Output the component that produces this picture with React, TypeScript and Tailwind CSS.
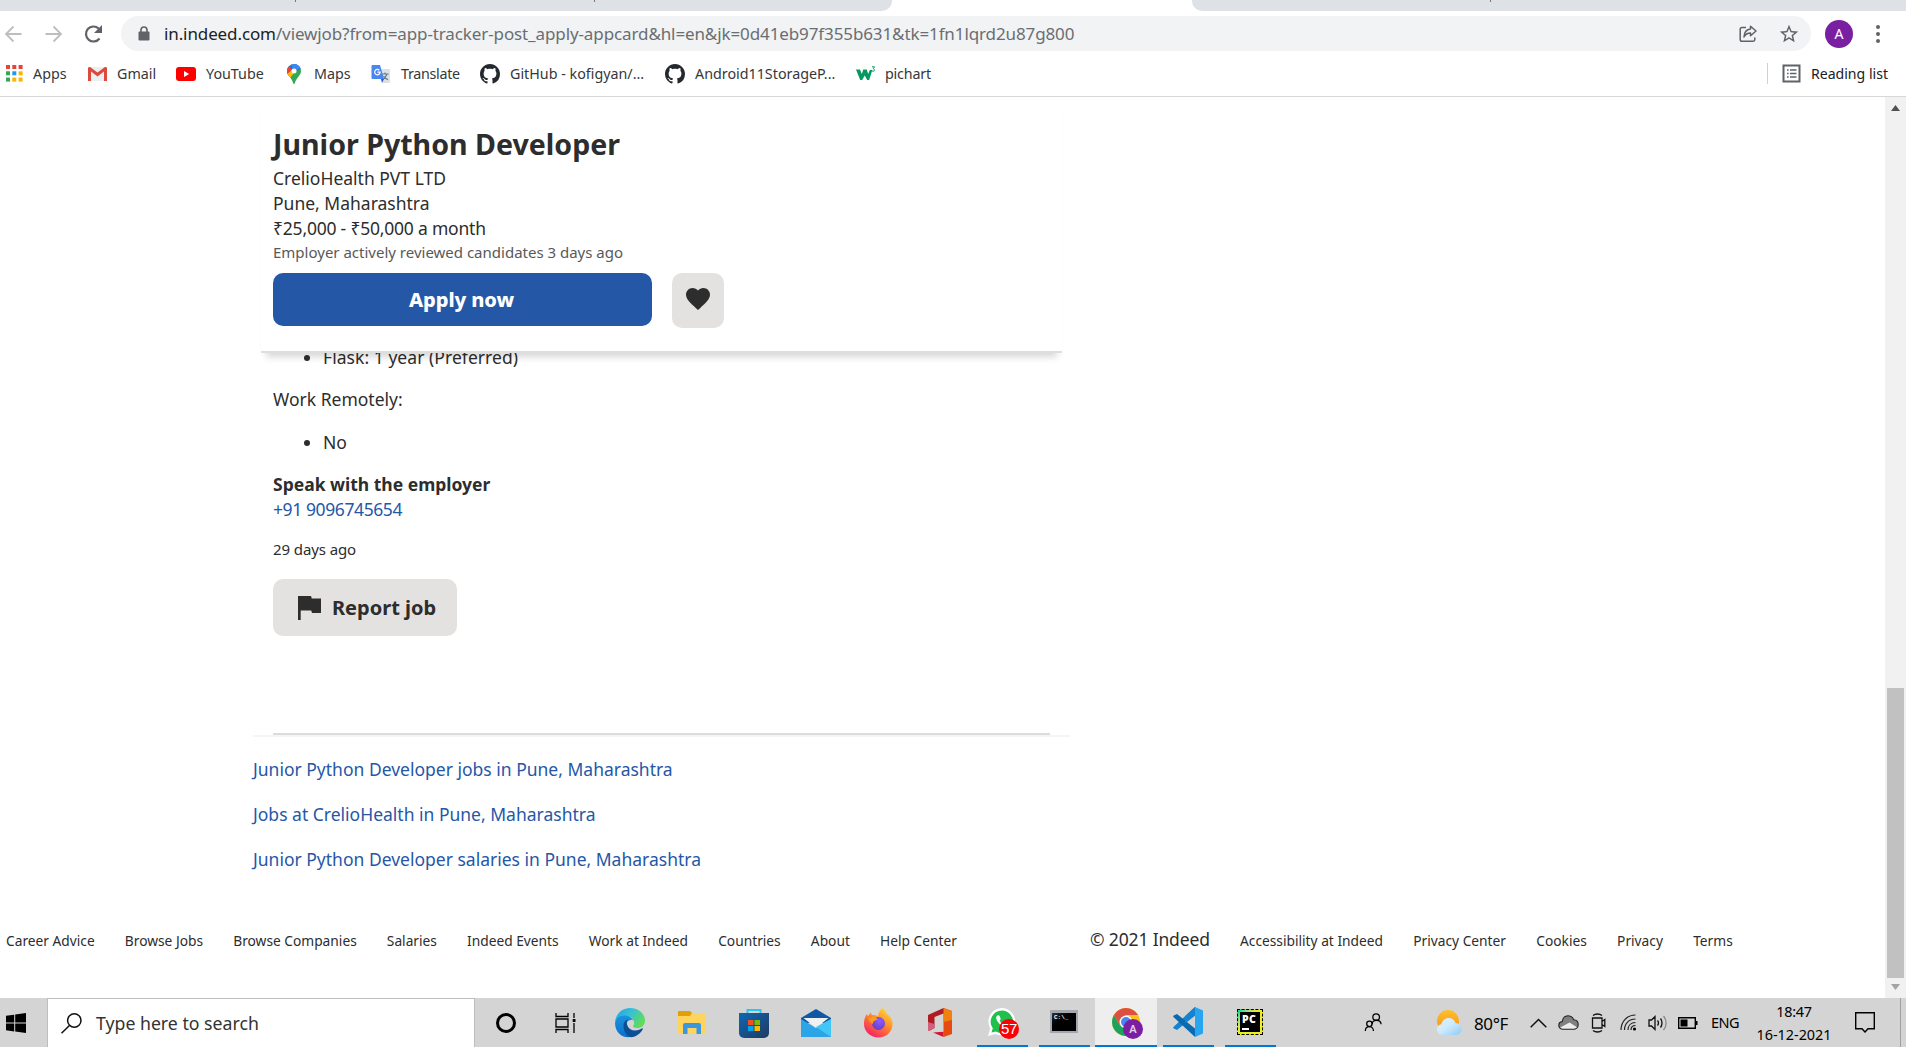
import type { ReactNode } from "react";

/* ---------- browser chrome icons ---------- */

const GitHubMark = () => (
  <svg width="20" height="20" viewBox="0 0 16 16" fill="#24292f">
    <path d="M8 0C3.58 0 0 3.58 0 8c0 3.54 2.29 6.53 5.47 7.59.4.07.55-.17.55-.38 0-.19-.01-.82-.01-1.49-2.01.37-2.53-.49-2.69-.94-.09-.23-.48-.94-.82-1.13-.28-.15-.68-.52-.01-.53.63-.01 1.08.58 1.23.82.72 1.21 1.87.87 2.33.66.07-.52.28-.87.51-1.07-1.78-.2-3.64-.89-3.64-3.95 0-.87.31-1.59.82-2.15-.08-.2-.36-1.02.08-2.12 0 0 .67-.21 2.2.82.64-.18 1.32-.27 2-.27s1.36.09 2 .27c1.53-1.04 2.2-.82 2.2-.82.44 1.1.16 1.92.08 2.12.51.56.82 1.27.82 2.15 0 3.07-1.87 3.75-3.65 3.95.29.25.54.73.54 1.48 0 1.07-.01 1.93-.01 2.2 0 .21.15.46.55.38A8.01 8.01 0 0 0 16 8c0-4.42-3.58-8-8-8z" />
  </svg>
);

const AppsGrid = () => {
  const colors = ["#ea4335", "#ea4335", "#ea4335", "#34a853", "#1a9bf0", "#fbb400", "#34a853", "#fbb400", "#fbb400"];
  return (
    <svg width="17" height="17" viewBox="0 0 17 17" className="ml-[3px]">
      {colors.map((c, i) => (
        <rect key={i} x={(i % 3) * 6.3} y={Math.floor(i / 3) * 6.3} width="4" height="4" fill={c} />
      ))}
    </svg>
  );
};

const Gmail = () => (
  <svg width="19" height="14" viewBox="0 0 19 14" className="ml-px">
    <path d="M1 0h17v14H1z" fill="#eceff1" />
    <path d="M0 1.5V14h3V4.6l6.5 4.8L16 4.6V14h3V1.5C19 0 17.4-.4 16.3.4L9.5 5.6 2.7.4C1.600-.4 0 0 0 1.500z" fill="#dc4a3d" />
  </svg>
);

const YouTube = () => (
  <svg width="20" height="14" viewBox="0 0 20 14">
    <rect width="20" height="14" rx="3" fill="#f00" />
    <path d="M8 4l5.200 3L8 10z" fill="#fff" />
  </svg>
);

const MapsPin = () => (
  <svg width="14" height="20" viewBox="0 0 14 20" className="ml-[3px]">
    <defs>
      <clipPath id="pin">
        <path d="M7 0a7 7 0 0 0-7 7c0 2 .8 3.500 2 5 2 2.500 3.500 4.300 4.200 7.200.3 1.100 1.300 1.100 1.600 0C8.500 16.300 10 14.500 12 12c1.200-1.500 2-3 2-5a7 7 0 0 0-7-7z" />
      </clipPath>
    </defs>
    <g clipPath="url(#pin)">
      <path d="M0 0h14v20H0z" fill="#34a853" />
      <path d="M-1 5L2 2l10 -3 4 6-9 2-6 7z" fill="#1a73e8" />
      <path d="M-1 4l3-2 4 4-5 6z" fill="#ea4335" />
      <path d="M-1 11L6 5l7-3.500L3 14z" fill="#fbbc04" />
      <path d="M4 0h6l4 4-7 3z" fill="#4285f4" />
    </g>
    <circle cx="7" cy="7" r="2.500" fill="#fff" />
  </svg>
);

const Translate = () => (
  <svg width="20" height="20" viewBox="0 0 20 20">
    <path d="M8 5h10a1 1 0 0 1 1 1v12a1 1 0 0 1-1 1h-6z" fill="#dde1e6" />
    <path d="M10.500 10h7M14 8.500V10m2 0c-.7 2.500-2.400 4.500-4.500 5.500M12.500 12c1 1.700 2.500 3 4.500 3.600" stroke="#607988" fill="none" strokeWidth="1.100" />
    <path d="M1.500 1H9l4 14H1.500a1 1 0 0 1-1-1V2a1 1 0 0 1 1-1z" fill="#4a86f0" />
    <path d="M10 15h3l-2 4z" fill="#2a56c6" />
    <path d="M8.300 6.200a2.700 2.700 0 1 0 .8 2H6.400" stroke="#fff" fill="none" strokeWidth="1.200" />
  </svg>
);

const W3 = () => (
  <svg width="20" height="15" viewBox="0 0 20 15" className="ml-px">
    <path d="M0 3.500h4l1.800 4.500L7.300 3.500h3.400L12.200 8l1.600-4h2.500L13.200 14h-2L8.700 9.500 6.200 14h-2z" fill="#059862" />
    <path d="M16 .8h2.500L17.200 2.700c1.700 0 1.700 2.600-.1 2.600-.8 0-1.300-.3-1.500-.8" stroke="#059862" fill="none" strokeWidth="1" />
  </svg>
);

const ReadingList = () => (
  <svg width="19" height="19" viewBox="0 0 19 19" fill="none" stroke="#5f6368" strokeWidth="2">
    <path d="M1.500 1.500h16v16h-16z" />
    <path d="M5 6h1.600M5 9.500h1.600M5 13h1.600M8 6h6.500M8 9.500h6.500M8 13h6.500" strokeWidth="1.500" />
  </svg>
);

/* ---------- taskbar icons ---------- */

const Edge = () => (
  <svg width="30" height="30" viewBox="0 0 30 30">
    <defs>
      <linearGradient id="eg" x1="0" y1="0" x2="1" y2=".5">
        <stop offset="0" stopColor="#1f9fe0" />
        <stop offset=".5" stopColor="#35c1d8" />
        <stop offset="1" stopColor="#5fdc5a" />
      </linearGradient>
      <linearGradient id="eb" x1="0" y1="0" x2="0" y2="1">
        <stop offset="0" stopColor="#1b94de" />
        <stop offset="1" stopColor="#0a6fcd" />
      </linearGradient>
    </defs>
    <path d="M0 14C1 5 8 0 15 0c9 0 15 6 15 12.500 0 5-3.500 7.500-7.500 7.500-3 0-5-1-4.500-2.200 2-2.500 1-6-1.500-8C12 6.500 4 8 0 14z" fill="url(#eg)" />
    <path d="M0 15C1 9 6 7 10.500 7.500 15 8 18.500 11 18.800 14c-2-3-7.300-2-7.800 3-.4 5 4 9.500 9 10.500C10 32.500 0 26 0 15z" fill="url(#eb)" />
    <path d="M8.500 18c0-4 2.200-6 4.500-7-3 4 0 11.500 7 11.500 3.500 0 5.500-1.200 7-2.200 1-.3 1 .6.5 1.500C25 26 20 30 14.500 29 10.500 27 8.500 22 8.500 18z" fill="#0c4f96" />
    <path d="M17.800 12c2 2 1.800 4.300.2 5.800-.3 1 .3 1.800 1.500 2.500-5 0-7-5.500-4.500-8 .8-.8 2-.8 2.800-.3z" fill="#d4d4d4" />
  </svg>
);

const Folder = () => (
  <svg width="28" height="24" viewBox="0 0 28 24">
    <path d="M0 1a1 1 0 0 1 1-1h11l2 2v4H0z" fill="#e2a100" />
    <path d="M0 5h12l2-3h13a1 1 0 0 1 1 1v19a1 1 0 0 1-1 1H1a1 1 0 0 1-1-1z" fill="#ffd45e" />
    <path d="M5 23V14a2 2 0 0 1 2-2h14a2 2 0 0 1 2 2v9h-4.500v-6h-9v6z" fill="#3a96dd" />
  </svg>
);

const Store = () => (
  <svg width="30" height="30" viewBox="0 0 30 30">
    <defs>
      <linearGradient id="st" x1="0" y1="0" x2="1" y2="1">
        <stop offset="0" stopColor="#0d67b5" />
        <stop offset="1" stopColor="#203a5f" />
      </linearGradient>
    </defs>
    <path d="M8.500 6V2h13v4" fill="none" stroke="#2fc3f2" strokeWidth="2" />
    <path d="M0 5h30v20a5 5 0 0 1-5 5H5a5 5 0 0 1-5-5z" fill="url(#st)" />
    <path d="M9 12h5.500v5H9z" fill="#f25022" />
    <path d="M15.500 12H21v5h-5.500z" fill="#7fba00" />
    <path d="M9 18h5.500v5H9z" fill="#00a4ef" />
    <path d="M15.500 18H21v5h-5.500z" fill="#ffb900" />
  </svg>
);

const Mail = () => (
  <svg width="30" height="28" viewBox="0 0 30 28">
    <path d="M0 9L15 0l15 9v5H0z" fill="#0f58a4" />
    <path d="M2.500 9h25L15 19z" fill="#f1f1f1" />
    <path d="M0 10l15 9 15-9v18H0z" fill="#2ba4e8" />
    <path d="M30 10v18L15 18z" fill="#42c6f5" />
  </svg>
);

const Firefox = () => (
  <svg width="29" height="30" viewBox="0 0 29 30">
    <defs>
      <linearGradient id="ff" x1=".85" y1="0" x2=".2" y2="1">
        <stop offset="0" stopColor="#ffe23a" />
        <stop offset=".45" stopColor="#ff8a2a" />
        <stop offset="1" stopColor="#f5156c" />
      </linearGradient>
      <radialGradient id="fp" cx=".6" cy=".3" r=".8">
        <stop offset="0" stopColor="#9059ff" />
        <stop offset="1" stopColor="#5b3fc4" />
      </radialGradient>
    </defs>
    <path d="M18 0c3 2 4 4 5 6 3 1.500 6 6 5.500 11C28 24 22 29.500 14.500 29.500S0 24 0 16c0-4 1-7.500 3-10l.8 2.500C5 7 6 5 7 4.500L7.800 7c3 0 5 .4 6.200 1.500C14 5 16 2 18 0z" fill="url(#ff)" />
    <circle cx="14.500" cy="15.500" r="6.500" fill="url(#fp)" />
    <path d="M4 10c4-2.500 8-1 10 1.500-2.500.2-3 1.500-4.500 2L8.500 16C6 14 5 12 4 10z" fill="#ff9a1f" />
  </svg>
);

const Office = () => (
  <svg width="24" height="29" viewBox="0 0 24 29">
    <path d="M15.500 0L24 3v23l-8.500 3z" fill="#e64a0f" />
    <path d="M15.500 0L24 3v9l-8.500 2z" fill="#f08010" />
    <path d="M15.500 0v5.500L6.500 9v11l-4.500 2.500H0V7z" fill="#b01c22" />
    <path d="M0 14l6.500 2v4L2 22.500H0z" fill="#d0607e" />
    <path d="M5 24.500l10.500-.7V29z" fill="#d01530" />
  </svg>
);

const WhatsApp = () => (
  <div className="relative">
    <svg width="28" height="28" viewBox="0 0 28 28">
      <path d="M14 0a13.700 13.700 0 0 0-11.800 20.500L0 28l7.500-2A13.700 13.700 0 1 0 14 0z" fill="#fff" />
      <path d="M14 2.500a11.300 11.300 0 0 0-9.200 17.800L3.500 24.500l4.300-1.100A11.300 11.300 0 1 0 14 2.500z" fill="#1fc04c" />
      <path d="M9.500 7.500c-2 1-1.500 3.700 0 6 2 3 4.500 5 7.500 6 2 .4 4-1 3.800-2.500l-3-1.600-1.600 1.600c-2.200-1-3.600-2.400-4.600-4.400L12.800 11 11.500 7.800c-.3-.6-1.200-.7-2-.3z" fill="#fff" />
    </svg>
    <span className="absolute left-[11px] top-[11px] flex size-[20px] items-center justify-center rounded-full bg-[#fb0007] font-['Liberation_Sans'] text-[15px] leading-none tracking-[-0.3px] text-white">
      57
    </span>
  </div>
);

const Terminal = () => (
  <div className="h-[23px] w-[28px] border-2 border-t-[3px] border-[#a4a8ae] bg-black bg-gradient-to-br from-[#333] via-black to-black pl-[2px] pt-px font-['Liberation_Mono'] text-[6px] font-bold leading-[7px] text-white">
    C:\_
  </div>
);

const Chrome = () => (
  <div className="relative">
    <svg width="28" height="28" viewBox="0 0 28 28">
      <circle cx="14" cy="14" r="14" fill="#fbc116" />
      <path d="M1.900 7A14 14 0 0 0 14 28l6-10.500L8 17.500z" fill="#1ba35e" />
      <path d="M14 7h12.100A14 14 0 0 0 1.900 7l6.100 10.500z" fill="#de4f43" />
      <circle cx="14" cy="14" r="6.500" fill="#fff" />
      <circle cx="14" cy="14" r="5" fill="#4587f3" />
    </svg>
    <span className="absolute left-[11px] top-[11px] flex size-[20px] items-center justify-center rounded-full bg-[#7b1fa2] text-[11px] font-semibold leading-none text-[#e3cdec]">
      A
    </span>
  </div>
);

const VSCode = () => (
  <svg width="30" height="30" viewBox="0 0 30 30">
    <path d="M22 8.500V0L.7 19.700a1.200 1.200 0 0 0 0 1.800L4 23z" fill="#1284d0" />
    <path d="M22 21.500V30L.7 10.300a1.200 1.200 0 0 1 0-1.800L4 7z" fill="#0a6ab0" />
    <path d="M22 8.500V0L12 9.300v6.800z" fill="#1284d0" />
    <path d="M22 0l8 3.500v23L22 30z" fill="#27a5f0" />
  </svg>
);

const PyCharm = () => (
  <div className="size-[26px] bg-gradient-to-br from-[#21d789] from-10% via-[#e6ee25] via-40% to-[#f0e92c] p-[3px] outline-1 -outline-offset-1 outline-dashed outline-black">
    <div className="flex size-full flex-col bg-black px-[2px] pt-[2px]">
      <span className="font-['Open_Sans'] text-[10.500px] font-extrabold leading-[11px] tracking-[0.3px] text-white">PC</span>
      <span className="mt-[3px] h-[2px] w-[7px] bg-white" />
    </div>
  </div>
);

const Weather = () => (
  <svg width="26" height="25" viewBox="0 0 26 25">
    <defs>
      <linearGradient id="sun" x1="0" y1="0" x2="0" y2="1">
        <stop offset="0" stopColor="#ffc02c" />
        <stop offset="1" stopColor="#f88d1a" />
      </linearGradient>
      <linearGradient id="weatherCloud" x1="0" y1="0" x2="1" y2="1">
        <stop offset="0" stopColor="#dff2ff" />
        <stop offset=".5" stopColor="#cbe9fd" />
        <stop offset="1" stopColor="#8fc9f5" />
      </linearGradient>
    </defs>
    <circle cx="12" cy="11" r="11" fill="url(#sun)" />
    <g fill="url(#weatherCloud)">
      <path d="M6.500 25C3 25 .8 22.600.8 19.600c0-2.900 2-5 4.700-5.300C6 10.500 9 8 12.500 8c3.600 0 6.300 2.200 7.200 5.300 3.400 0 6.100 2.500 6.100 5.800 0 3.400-2.700 5.900-6 5.900z" />
    </g>
  </svg>
);

/* ---------- data ---------- */

const bookmarks: { label: string; icon: ReactNode; cls: string }[] = [
  { label: "Apps", icon: <AppsGrid />, cls: "w-[84px]" },
  { label: "Gmail", icon: <Gmail />, cls: "w-[89px]" },
  { label: "YouTube", icon: <YouTube />, cls: "w-[108px]" },
  { label: "Maps", icon: <MapsPin />, cls: "w-[87px]" },
  { label: "Translate", icon: <Translate />, cls: "w-[109px] tracking-[-0.3px]" },
  { label: "GitHub - kofigyan/...", icon: <GitHubMark />, cls: "w-[185px]" },
  { label: "Android11StorageP...", icon: <GitHubMark />, cls: "w-[190px]" },
  { label: "pichart", icon: <W3 />, cls: "w-[90px] tracking-[-0.2px]" },
];

const footerLeft = ["Career Advice", "Browse Jobs", "Browse Companies", "Salaries", "Indeed Events", "Work at Indeed", "Countries", "About", "Help Center"];
const footerRight = ["Accessibility at Indeed", "Privacy Center", "Cookies", "Privacy", "Terms"];

const tasks: { icon: ReactNode; state?: "open" | "active" }[] = [
  { icon: <span className="size-[20px] rounded-full border-[3px] border-black" /> },
  {
    icon: (
      <svg width="22" height="20" viewBox="0 0 22 20" fill="none" stroke="#000" strokeWidth="1.300" className="-ml-1">
        <path d="M1 0v3.500h12V0M1 6h12v8H1zM1 20v-3.500h12V20M19 0v5M19 10v10" />
        <path d="M17.700 6h2.800v3h-2.800z" fill="#000" stroke="none" />
      </svg>
    ),
  },
  { icon: <Edge /> },
  { icon: <Folder /> },
  { icon: <Store /> },
  { icon: <Mail /> },
  { icon: <Firefox /> },
  { icon: <Office /> },
  { icon: <WhatsApp />, state: "open" },
  { icon: <Terminal />, state: "open" },
  { icon: <Chrome />, state: "active" },
  { icon: <VSCode />, state: "open" },
  { icon: <PyCharm />, state: "open" },
];

/* ---------- sections ---------- */

function TabStrip() {
  return (
    <div className="flex h-[11px] shrink-0 bg-white">
      <div className="flex w-[892px] rounded-br-[10px] bg-[#dee1e6]">
        <span className="ml-[295px] h-[2px] w-px bg-[#777]" />
        <span className="ml-[298px] h-[2px] w-px bg-[#777]" />
      </div>
      <div className="ml-[300px] flex flex-1 rounded-bl-[10px] bg-[#dee1e6]">
        <span className="ml-[298px] h-[2px] w-px bg-[#777]" />
      </div>
    </div>
  );
}

function Toolbar() {
  return (
    <div className="flex h-[45px] shrink-0 items-center">
      <svg width="110" height="22" viewBox="0 0 110 22" fill="none" strokeWidth="1.800" className="shrink-0">
        <path d="M21.500 11H6.500M13.500 3.500L6 11l7.500 7.500" stroke="#bcbec1" />
        <path d="M45.500 11h15M53.500 3.500L61 11l-7.500 7.500" stroke="#bcbec1" />
        <path d="M99.500 15.500A7.500 7.500 0 1 1 98.600 5.500L100.500 7.500" stroke="#5f6368" strokeWidth="2.200" />
        <path d="M102 2v8h-8z" fill="#5f6368" />
      </svg>
      <div className="ml-[11px] flex h-[35px] w-[1690px] shrink-0 items-center rounded-full bg-[#f1f3f4]">
        <svg width="12" height="15" viewBox="0 0 12 15" className="ml-[17px]">
          <path d="M3 6V4a3 3 0 0 1 6 0v2" fill="none" stroke="#5f6368" strokeWidth="1.600" />
          <rect x=".5" y="5.500" width="11" height="9" rx="1" fill="#5f6368" />
        </svg>
        <span className="ml-[14px] whitespace-nowrap text-[17px] tracking-[-0.11px] text-[#6a6e72]">
          <span className="text-[#202124]">in.indeed.com</span>
          /viewjob?from=app-tracker-post_apply-appcard&amp;hl=en&amp;jk=0d41eb97f355b631&amp;tk=1fn1lqrd2u87g800
        </span>
        <svg width="18" height="18" viewBox="0 0 18 18" fill="none" stroke="#5f6368" strokeWidth="1.500" className="ml-auto">
          <path d="M7 2.500H3A1.800 1.800 0 0 0 1.200 4.300v10.200a1.800 1.800 0 0 0 1.800 1.800h11a1.800 1.800 0 0 0 1.800-1.800V12.500" />
          <path d="M11.500 1.200L17 6l-5.500 4.800V8C8.500 8 6.500 9.200 5 12c.2-4.500 2.500-7.500 6.500-8z" strokeLinejoin="round" />
        </svg>
        <svg width="22" height="22" viewBox="0 0 24 24" fill="#5f6368" className="ml-[21px] mr-[11px]">
          <path d="M22 9.240l-7.190-.62L12 2 9.190 8.630 2 9.240l5.460 4.730L5.820 21 12 17.270 18.180 21l-1.630-7.030L22 9.240zM12 15.400l-3.760 2.270 1-4.280-3.320-2.880 4.380-.38L12 6.100l1.710 4.040 4.380.38-3.320 2.880 1 4.280L12 15.400z" />
        </svg>
      </div>
      <span className="ml-[14px] flex size-[28px] shrink-0 items-center justify-center rounded-full bg-[#7b1fa2] text-[14px] text-white">A</span>
      <svg width="4" height="18" viewBox="0 0 4 18" fill="#5f6368" className="ml-[23px] shrink-0">
        <circle cx="2" cy="2" r="2" />
        <circle cx="2" cy="9" r="2" />
        <circle cx="2" cy="16" r="2" />
      </svg>
    </div>
  );
}

function BookmarksBar() {
  return (
    <div className="flex h-[41px] shrink-0 items-center border-b border-[#d6d8db] pb-[5px] pl-[3px] text-[14.300px] text-[#35383b]">
      {bookmarks.map((b) => (
        <div key={b.label} className={`flex shrink-0 items-center whitespace-nowrap ${b.cls}`}>
          <span className="w-[30px] shrink-0">{b.icon}</span>
          {b.label}
        </div>
      ))}
      <div className="ml-auto flex items-center border-l border-[#cfd1d4] pl-[14px] pr-[18px] text-[#202124]">
        <ReadingList />
        <span className="ml-[10px] whitespace-nowrap text-[14.100px]">Reading list</span>
      </div>
    </div>
  );
}

function JobHeader() {
  return (
    <header className="relative z-10 ml-[261px] h-[256px] w-[801px] border-b-2 border-[#dededd] bg-white pl-[12px] pt-[28px] shadow-[0_9px_7px_-5px_rgba(0,0,0,0.16)]">
      <h1 className="whitespace-nowrap text-[28.570px] font-bold leading-[38px]">Junior Python Developer</h1>
      <div className="mt-[3px] whitespace-nowrap text-[17.500px] leading-[25px]">
        <p>CrelioHealth PVT LTD</p>
        <p>Pune, Maharashtra</p>
        <p className="tracking-[-0.210px]">₹25,000 - ₹50,000 a month</p>
      </div>
      <p className="text-[15px] leading-[22px] text-[#595959]">Employer actively reviewed candidates 3 days ago</p>
      <div className="mt-[10px] flex items-start gap-5">
        <button className="h-[53px] w-[379px] rounded-[10px] bg-[#2557a7] pr-[2px] text-[20px] font-extrabold tracking-[-0.1px] text-white">Apply now</button>
        <button className="flex h-[55px] w-[52px] items-center justify-center rounded-[10px] bg-[#e4e2e0] pb-[3px]">
          <svg width="24" height="22" viewBox="2 3 20 18.350" fill="#2d2d2d">
            <path d="M12 21.350l-1.450-1.320C5.400 15.360 2 12.280 2 8.500 2 5.420 4.420 3 7.500 3c1.740 0 3.410.810 4.500 2.090C13.090 3.810 14.760 3 16.500 3 19.580 3 22 5.420 22 8.500c0 3.780-3.400 6.860-8.550 11.540L12 21.350z" />
          </svg>
        </button>
      </div>
    </header>
  );
}

function JobBody() {
  return (
    <article className="-mt-2 ml-[273px] w-[777px] border-b-2 border-[#dddcdb] pb-[97px] text-[17.500px] leading-[25px]">
      <ul className="list-disc pl-[50px]">
        <li className="tracking-[0.050px]">Flask: 1 year (Preferred)</li>
      </ul>
      <p className="mt-[17px]">Work Remotely:</p>
      <ul className="mt-[18px] list-disc pl-[50px]">
        <li>No</li>
      </ul>
      <p className="mt-[17px] font-bold">Speak with the employer</p>
      <a className="block tracking-[-0.400px] text-[#2557a7]">+91 9096745654</a>
      <p className="mt-[16px] text-[15px] leading-[22px] tracking-[-0.100px]">29 days ago</p>
      <button className="mt-[19px] flex h-[57px] w-[184px] items-center rounded-[10px] bg-[#e4e2e0] pl-[25px] text-[20px] font-bold">
        <svg width="23" height="24" viewBox="0 0 23 24" fill="#2d2d2d">
          <path d="M0 0h13l.8 2.500H23V17h-9l-.8-2.500H2.700V24H0z" />
        </svg>
        <span className="mb-px ml-[11px] whitespace-nowrap">Report job</span>
      </button>
    </article>
  );
}

function Taskbar() {
  return (
    <div className="flex h-[49px] shrink-0 items-stretch bg-[#d4d4d4] text-black">
      <div className="flex w-[47px] items-center pl-[6px]">
        <svg width="20" height="20" viewBox="0 0 20 20">
          <path d="M0 2.800L8.200 1.700V9.500H0zM9.200 1.500L20 0v9.500H9.200zM0 10.500h8.200v7.900L0 17.200zM9.200 10.500H20V20L9.200 18.500z" />
        </svg>
      </div>
      <div className="flex w-[428px] items-center border border-b-0 border-[#bdbdbd] bg-white pl-[13px]">
        <svg width="21" height="21" viewBox="0 0 21 21" fill="none" stroke="#111" strokeWidth="1.500">
          <circle cx="13.300" cy="7.500" r="6.700" />
          <path d="M8.700 12.300L.5 20.300" />
        </svg>
        <span className="ml-[14px] text-[17.700px] text-[#333]">Type here to search</span>
      </div>
      {tasks.map((t, i) => (
        <div key={i} className={`flex w-[62px] flex-col items-center ${t.state === "active" ? "bg-[#eee]" : ""}`}>
          <div className="flex flex-1 items-center">{t.icon}</div>
          {t.state && <span className={`h-[2px] bg-[#0078d7] ${t.state === "active" ? "w-full" : "w-[51px]"}`} />}
        </div>
      ))}
      <div className="ml-[77px] flex items-center">
        <span className="flex w-[30px] justify-center">
          <svg width="18" height="21" viewBox="0 0 20 21" fill="none" stroke="#000" strokeWidth="1.400">
            <circle cx="13.500" cy="4.500" r="3.700" />
            <path d="M9 12.500c0-6 9.500-6 10 0" />
            <circle cx="6" cy="12" r="3" />
            <path d="M1.500 20c0-6.500 9-6.500 9 0" />
          </svg>
        </span>
        <span className="ml-[46px] flex w-[30px] justify-center"><Weather /></span>
        <span className="ml-[10px] mt-[3px] w-[49px] text-[17px] tracking-[-0.400px]">80°F</span>
        <span className="flex w-[30px] justify-center">
          <svg width="17" height="10" viewBox="0 0 17 10" fill="none" stroke="#111" strokeWidth="1.500"><path d="M.7 9.300L8.500 1.500l7.800 7.800" /></svg>
        </span>
        <span className="flex w-[30px] justify-center">
          <svg width="21" height="15" viewBox="0 0 21 15">
            <path d="M5 14.200C2.500 14.200.8 12.600.8 10.400.8 8.300 2.300 6.800 4.200 6.600 4.700 3.200 7 .8 10.200.8c2.700 0 4.600 1.500 5.500 3.900 2.700.2 4.500 2.100 4.500 4.700 0 2.800-2 4.800-4.700 4.800z" fill="#808080" />
            <path d="M1.800 12.800L11.500 7.500l7.500 4.700c-.9 1.300-2 2-3.500 2H5c-1.400 0-2.500-.5-3.200-1.400z" fill="#ececec" />
            <path d="M5 14.200C2.500 14.200.8 12.600.8 10.400.8 8.300 2.300 6.800 4.200 6.600 4.700 3.200 7 .8 10.200.8c2.700 0 4.600 1.500 5.500 3.900 2.700.2 4.500 2.100 4.500 4.700 0 2.800-2 4.800-4.700 4.800z" fill="none" stroke="#222" strokeWidth="1.100" />
          </svg>
        </span>
        <span className="flex w-[30px] justify-center">
          <svg width="15" height="20" viewBox="0 0 15 20" fill="none" stroke="#111" strokeWidth="1.300">
            <path d="M2 2.500c2.500-2 6.500-2 9 0M2 17.500c2.500 2 6.500 2 9 0M1.500 5h9.500v10H1.500zM11 8.500L13.800 6.500v7L11 11.500" />
          </svg>
        </span>
        <span className="flex w-[30px] justify-center">
          <svg width="17" height="17" viewBox="0 0 17 17" fill="none" stroke="#222" strokeWidth="1.200">
            <path d="M1 16C1 7.500 7 1 15.500 1M4.500 16c0-6.500 4.500-11 11-11M8 16c0-4.500 3-7.500 7.500-7.500M11 16c0-2.500 1.500-4.500 4.500-4.500" />
            <circle cx="14.500" cy="15" r="1.600" fill="#000" stroke="none" />
          </svg>
        </span>
        <span className="flex w-[30px] justify-center">
          <svg width="20" height="18" viewBox="0 0 20 18" fill="none" stroke="#111" strokeWidth="1.300">
            <path d="M1 6h2.500L7 2.500v13L3.500 12H1zM9.500 6.500c1.200 1.500 1.200 3.500 0 5M12.500 4.500c2 2.500 2 6.500 0 9" />
            <path d="M15.500 2c3.500 4 3.500 10 0 14" stroke="#888" />
          </svg>
        </span>
        <span className="flex w-[30px] justify-center">
          <svg width="20" height="12" viewBox="0 0 20 12">
            <path d="M.7.700h16.600v10.600H.7z" fill="none" stroke="#000" strokeWidth="1.400" />
            <path d="M2.500 2.500h7v7h-7zM18 4h1.500v4H18z" />
          </svg>
        </span>
        <span className="ml-[8px] mt-px w-[43px] text-[14.500px] tracking-[-0.500px]">ENG</span>
        <span className="ml-px w-[78px] whitespace-nowrap text-center text-[14.400px] leading-[23px]">
          <span className="block tracking-[-0.300px]">18:47</span>
          <span className="block">16-12-2021</span>
        </span>
        <span className="ml-[17px] flex w-[30px] justify-center">
          <svg width="20" height="21" viewBox="0 0 20 21" fill="none" stroke="#000" strokeWidth="1.400"><path d="M.7.700h18.600v16H13L10 20l-3-3.300H.7z" /></svg>
        </span>
        <span className="ml-[20px] h-[49px] w-px bg-[#a0a0a0]" />
      </div>
    </div>
  );
}

export default function App() {
  return (
    <div className="flex h-[1047px] w-[1906px] flex-col overflow-hidden bg-white font-['Noto_Sans',sans-serif] text-[#2d2d2d]">
      <TabStrip />
      <Toolbar />
      <BookmarksBar />
      <div className="flex h-[901px] shrink-0">
        <main className="w-[1885px]">
          <JobHeader />
          <JobBody />
          <nav className="ml-[253px] flex w-[817px] flex-col gap-5 border-t-2 border-[#f5f5f4] pt-5 text-[17.500px] leading-[25px] text-[#2557a7]">
            <a>Junior Python Developer jobs in Pune, Maharashtra</a>
            <a>Jobs at CrelioHealth in Pune, Maharashtra</a>
            <a>Junior Python Developer salaries in Pune, Maharashtra</a>
          </nav>
          <footer className="mt-[59px] flex whitespace-nowrap pl-[6px] text-[13.750px] leading-5">
            <div className="flex w-[1084px] gap-[30.125px]">
              {footerLeft.map((l) => <a key={l}>{l}</a>)}
            </div>
            <div className="flex gap-[30.250px]">
              <span className="-mt-[2px] text-[17.500px] tracking-[-0.150px]">© 2021 Indeed</span>
              {footerRight.map((l) => <a key={l}>{l}</a>)}
            </div>
          </footer>
        </main>
        <div className="flex w-[21px] flex-col items-center bg-[#f1f1f1]">
          <svg width="9" height="6" viewBox="0 0 9 6" fill="#505050" className="mt-[8px]"><path d="M4.500 0L9 6H0z" /></svg>
          <div className="mt-[577px] h-[290px] w-[17px] bg-[#c1c1c1]" />
          <svg width="9" height="6" viewBox="0 0 9 6" fill="#a3a3a3" className="mt-[6px]"><path d="M0 0h9L4.500 6z" /></svg>
        </div>
      </div>
      <Taskbar />
    </div>
  );
}
